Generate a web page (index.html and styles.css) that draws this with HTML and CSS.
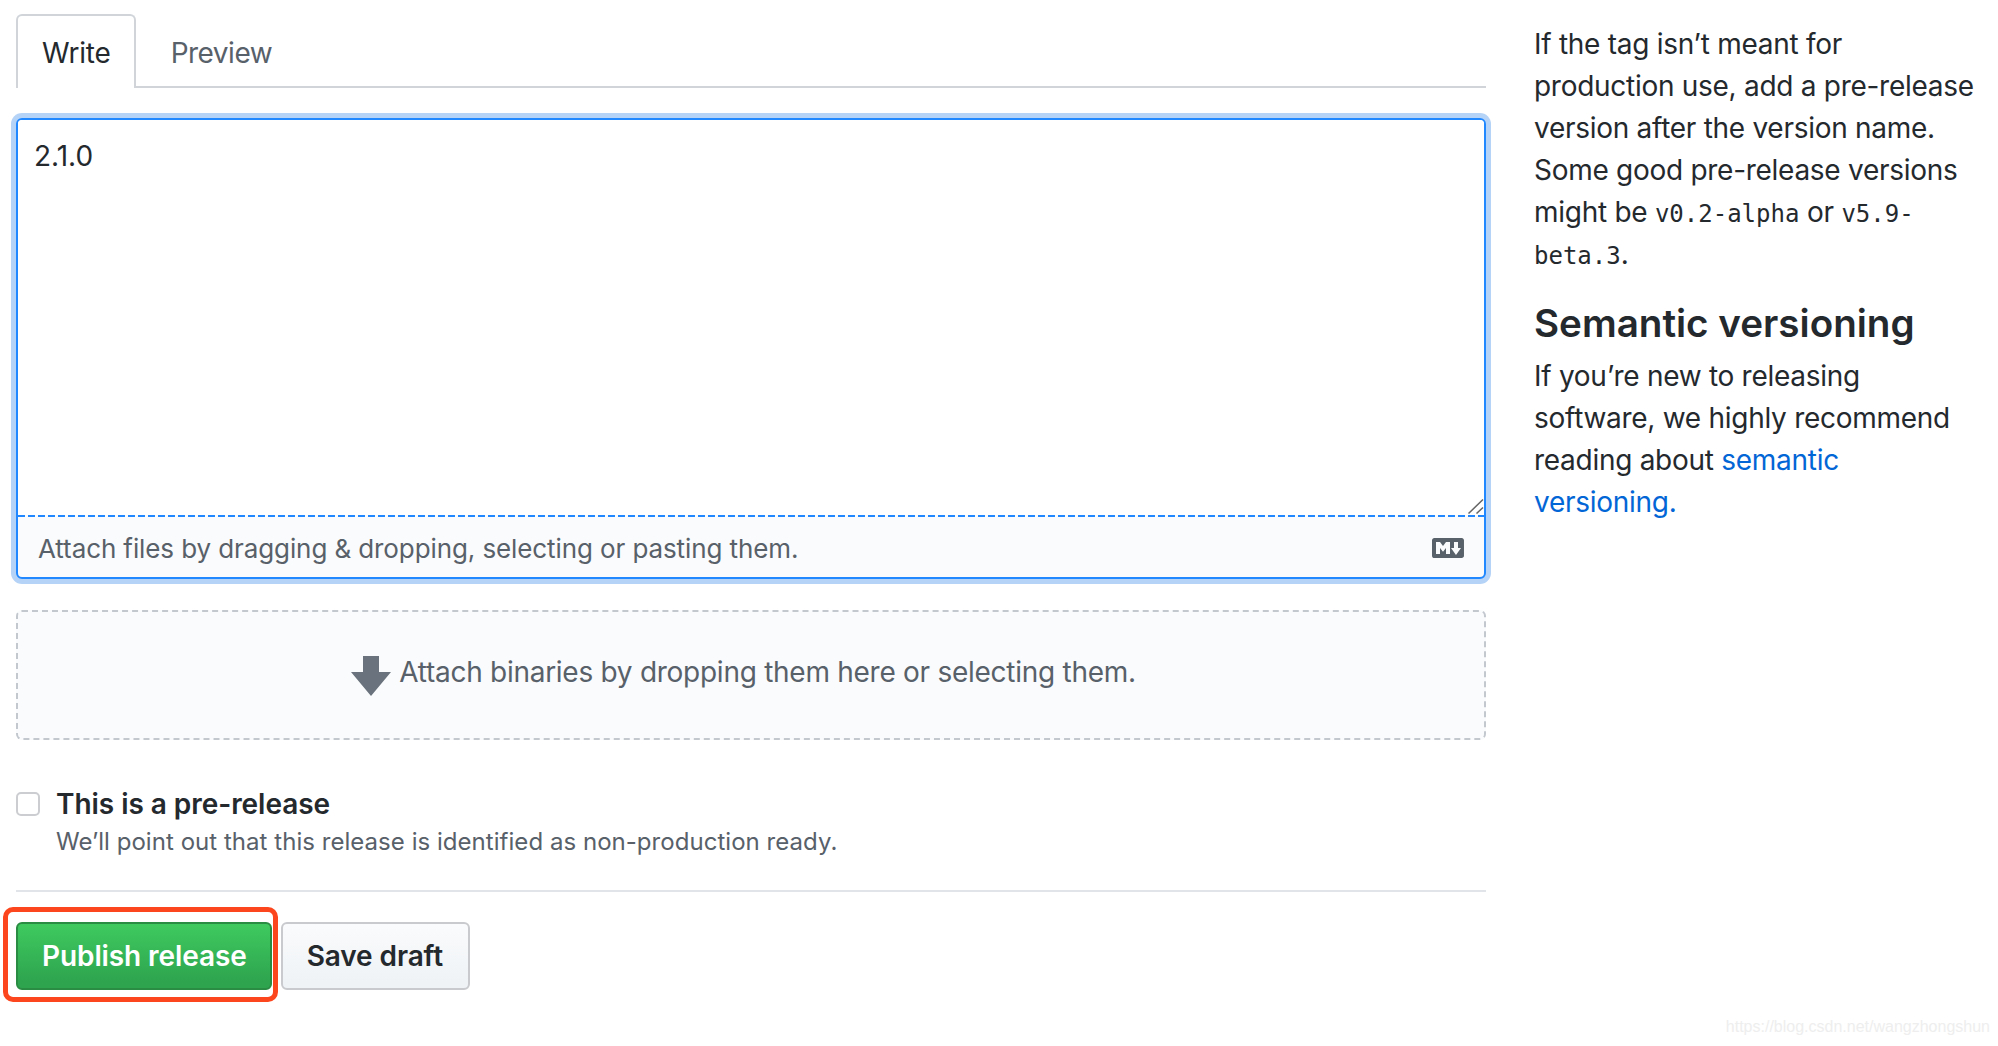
FILE: index.html
```html
<!DOCTYPE html>
<html>
<head>
	<meta charset="UTF-8">
	<title>Release</title>
	<link rel="stylesheet" href="styles.css">
</head>
<body>
	<div class="page">
		<form class="main">
			<div class="tabs">
				<a class="tab selected">Write</a>
				<a class="tab">Preview</a>
			</div>
			<div class="editor">
				<div class="field">
					<textarea class="body-field">2.1.0</textarea>
					<svg class="grip" viewBox="0 0 16 15"><path d="M0.5 14.5L15 0.5M8.5 14.5L15 8.5"/></svg>
				</div>
				<div class="attach-bar">
					<span>Attach files by dragging &amp; dropping, selecting or pasting them.</span>
					<svg class="md-icon" viewBox="0 3 16 10"><path d="M14.85 3H1.15C.52 3 0 3.52 0 4.15v7.69C0 12.48.52 13 1.15 13h13.69c.64 0 1.15-.52 1.15-1.15v-7.7C16 3.52 15.48 3 14.85 3zM9 11H7V8L5.5 9.92 4 8v3H2V5h2l1.5 2L7 5h2v6zm2.99.5L9.5 8H11V5h2v3h1.5l-2.51 3.5z"/></svg>
				</div>
			</div>
			<div class="dropzone">
				<svg class="arrow" viewBox="0 0 40 40"><path d="M12 0h16v16h12L20 40 0 16h12z"/></svg>
				<span>Attach binaries by dropping them here or selecting them.</span>
			</div>
			<label class="check">
				<input type="checkbox">
				<span>
					<b>This is a pre-release</b>
					<small>We’ll point out that this release is identified as non-production ready.</small>
				</span>
			</label>
			<div class="actions">
				<div class="marked">
					<button type="button" class="btn primary">Publish release</button>
				</div>
				<button type="button" class="btn">Save draft</button>
			</div>
		</form>
		<aside class="side">
			<p>If the tag isn’t meant for production use, add a pre-release version after the version name. Some good pre-release versions might be <code>v0.2-alpha</code> or <code>v5.9-beta.3</code>.</p>
			<h2>Semantic versioning</h2>
			<p>If you’re new to releasing software, we highly recommend reading about <a href="#">semantic versioning.</a></p>
		</aside>
	</div>
	<div class="watermark">https://blog.csdn.net/wangzhongshun</div>
</body>
</html>
```

FILE: styles.css
```css
* {
	box-sizing: border-box;
}
body {
	margin: 0;
	font-family: Inter, "Liberation Sans", sans-serif;
	font-size: 28px;
	line-height: 42px;
	letter-spacing: -0.2px;
	color: #24292e;
	background: #fff;
}
.page {
	display: flex;
	min-height: 1046px;
	padding: 14px 0 0 16px;
}
.main {
	width: 1470px;
	flex: none;
}
.side {
	width: 445px;
	margin-left: 48px;
	padding-top: 9px;
	letter-spacing: -0.28px;
}
.side p {
	margin: 0;
}
.side h2 {
	margin: 23px 0 7px;
	font-size: 38.6px;
	line-height: 50px;
	font-weight: 600;
	letter-spacing: 0;
}
.side a {
	color: #0366d6;
	text-decoration: none;
}
code {
	font-family: "DejaVu Sans Mono", "Liberation Mono", monospace;
	font-size: 24px;
	line-height: 1;
	letter-spacing: 0;
}

/* tabs */
.tabs {
	display: flex;
	height: 74px;
	border-bottom: 2px solid #d1d5da;
}
.tab {
	height: 74px;
	padding: 16px 23px 0 24px;
	line-height: 42px;
	color: #586069;
	border: 2px solid transparent;
	border-bottom: 0;
}
.tab.selected {
	color: #24292e;
	background: #fff;
	border-color: #d1d5da;
	border-radius: 6px 6px 0 0;
}
.tab + .tab {
	margin-left: 9px;
	letter-spacing: -0.5px;
}

/* editor */
.editor {
	margin-top: 30px;
	border: 2px solid #2188ff;
	border-radius: 6px;
	box-shadow: 0 0 0 5px #b5d3f7;
	background: #fafbfc;
}
.field {
	position: relative;
}
.body-field {
	display: block;
	width: 100%;
	height: 395px;
	padding: 15px 16px;
	border: 0;
	border-radius: 4px 4px 0 0;
	outline: 0;
	resize: none;
	font: inherit;
	color: #24292e;
	background: #fff;
}
.grip {
	position: absolute;
	right: 0;
	bottom: 1px;
	width: 16px;
	height: 15px;
	fill: none;
	stroke: #666;
	stroke-width: 1.5;
}
.attach-bar {
	display: flex;
	justify-content: space-between;
	align-items: center;
	height: 62px;
	padding: 5px 20px 0;
	font-size: 26px;
	letter-spacing: -0.1px;
	color: #586069;
	background: repeating-linear-gradient(90deg, #2188ff 0 7px, transparent 7px 10px) top / 100% 2px no-repeat;
}
.md-icon {
	width: 32px;
	height: 20px;
	margin-bottom: 2px;
	fill: #586069;
}

/* drop area */
.dropzone {
	display: flex;
	justify-content: center;
	align-items: center;
	gap: 8px;
	height: 130px;
	margin-top: 31px;
	padding-right: 15px;
	border: 2px dashed #c3c8cf;
	border-radius: 6px;
	background: #fafbfc;
	color: #586069;
	letter-spacing: -0.27px;
}
.dropzone span {
	margin-bottom: 6px;
}
.arrow {
	width: 40px;
	height: 40px;
	margin-top: 2px;
	fill: #6a737d;
}

/* pre-release option */
.check {
	display: flex;
	gap: 16px;
	padding: 46px 0 29px;
	border-bottom: 2px solid #e1e4e8;
	letter-spacing: 0;
}
.check input {
	appearance: none;
	flex: none;
	width: 24px;
	height: 24px;
	margin: 6px 0 0;
	border: 2px solid #cbcdd0;
	border-radius: 5px;
	background: #fff;
}
.check b {
	display: block;
	font-weight: 600;
	line-height: 37px;
	letter-spacing: -0.05px;
}
.check small {
	display: block;
	font-size: 24px;
	line-height: 38px;
	letter-spacing: 0.04px;
	color: #586069;
}

/* buttons */
.actions {
	display: flex;
	gap: 9px;
	margin-top: 30px;
}
.marked {
	position: relative;
}
.marked::after {
	content: "";
	position: absolute;
	top: -15px;
	left: -13px;
	right: -6px;
	bottom: -12px;
	border: 5px solid #fc471e;
	border-radius: 10px;
}
.btn {
	display: block;
	height: 68px;
	padding: 0 25px 0 24px;
	font: 600 28px Inter, "Liberation Sans", sans-serif;
	letter-spacing: -0.1px;
	color: #24292e;
	border: 2px solid #c8cacd;
	border-radius: 6px;
	background: linear-gradient(#fafbfc, #eff3f6 90%);
}
.btn.primary {
	padding-right: 23px;
	color: #fff;
	border-color: #2a8c42;
	background: linear-gradient(#3fca5f, #2ea44f 90%);
}

.watermark {
	position: absolute;
	right: 8px;
	bottom: 9px;
	font-family: "Liberation Sans", sans-serif;
	font-size: 16px;
	line-height: 20px;
	letter-spacing: 0;
	color: #eeeeee;
}
```
